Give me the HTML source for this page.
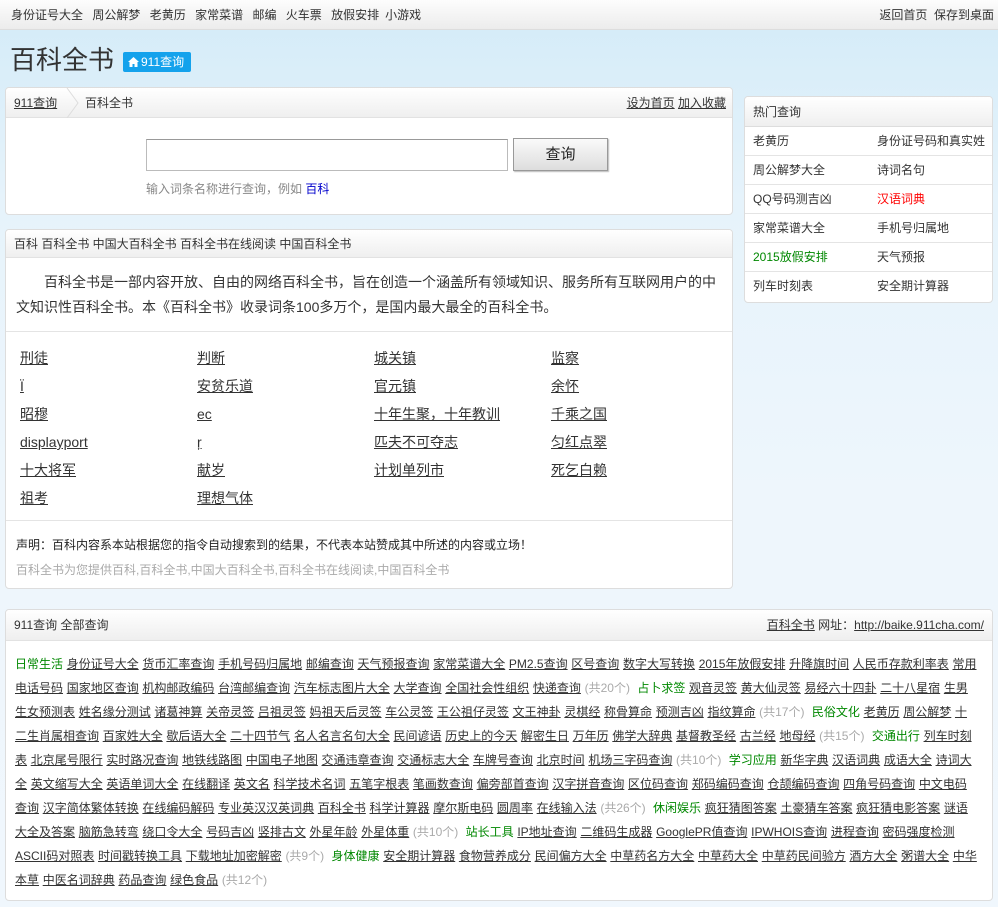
<!DOCTYPE html>
<html><head><meta charset="utf-8">
<style>
*{margin:0;padding:0;box-sizing:border-box}
body{width:998px;height:907px;overflow:hidden;font-family:"Liberation Sans","Noto Sans CJK SC",sans-serif;font-size:12px;color:#333;background:linear-gradient(180deg,#d3ebf8 0px,#e6f3fb 200px,#eef6fc 500px,#f0f7fd 907px);position:relative}
a{color:#333;text-decoration:underline}
.top{position:absolute;left:0;top:0;width:998px;height:30px;background:linear-gradient(#fdfdfd,#ececec);border-bottom:1px solid #ddd;line-height:30px;font-size:12px}
.top .l{position:absolute;left:11px}
.top .l span{margin-right:6px}
.top .r{position:absolute;right:4px}
.title{position:absolute;left:10px;top:42px;font-size:26px;color:#333;line-height:36px}
.badge{position:absolute;left:123px;top:52px;width:68px;height:20px;background:#14a2ec;color:#fff;font-size:12px;line-height:20px;border-radius:2px;padding-left:18px}
.badge svg{position:absolute;left:5px;top:5px}
.box{position:absolute;background:#fff;border:1px solid #ddd;border-radius:4px;overflow:hidden}
.hd{height:30px;background:linear-gradient(#fff,#efefef);border-bottom:1px solid #e2e2e2;line-height:30px;padding-left:8px;position:relative}
.links a{position:absolute;font-size:14px;line-height:16px}
.side div{height:29px;border-bottom:1px solid #e4e4e4;line-height:29px;position:relative;white-space:nowrap}
.side span{position:absolute}
.bot{position:absolute;left:15px;top:652px;width:963px;line-height:24px;font-size:12px;word-spacing:0.35px}
.g{color:#080}
.n{color:#aaa}
</style></head><body>
<div class="top"><div class="l"><span>身份证号大全</span> <span>周公解梦</span> <span>老黄历</span> <span>家常菜谱</span> <span>邮编</span> <span>火车票</span> <span>放假安排</span>小游戏</div><div class="r">返回首页 &nbsp;保存到桌面</div></div>
<div class="title">百科全书</div>
<div class="badge"><svg width="11" height="10" viewBox="0 0 11 10"><path d="M5.5 0L0 5h1.5v5h3V7h2v3h3V5H11z" fill="#fff"/></svg>911查询</div>

<div class="box" style="left:5px;top:87px;width:728px;height:128px">
<div class="hd" style="padding-left:0"><a style="position:absolute;left:8px">911查询</a><svg style="position:absolute;left:60px;top:0" width="14" height="30"><path d="M1 0L12 15L1 30" fill="none" stroke="#ddd"/></svg><span style="position:absolute;left:79px">百科全书</span><span style="position:absolute;right:6px"><a>设为首页</a> <a>加入收藏</a></span></div>
<div style="position:absolute;left:140px;top:51px;width:362px;height:32px;border:1px solid #bbb;border-top-color:#999"></div>
<div style="position:absolute;left:507px;top:50px;width:95px;height:33px;border:1px solid #999;background:linear-gradient(#fafafa,#ddd);text-align:center;line-height:31px;font-size:15px;color:#222;box-shadow:1px 1px 1px #bbb">查询</div>
<div style="position:absolute;left:140px;top:92px;color:#888">输入词条名称进行查询，例如 <span style="color:#00c">百科</span></div>
</div>

<div class="box" style="left:5px;top:229px;width:728px;height:360px">
<div class="hd" style="height:28px;line-height:28px">百科 百科全书 中国大百科全书 百科全书在线阅读 中国百科全书</div>
<div style="position:absolute;left:10px;top:40px;width:708px;font-size:14px;line-height:25px;text-indent:28px;color:#333">百科全书是一部内容开放、自由的网络百科全书，旨在创造一个涵盖所有领域知识、服务所有互联网用户的中文知识性百科全书。本《百科全书》收录词条100多万个，是国内最大最全的百科全书。</div>
<div style="position:absolute;left:0;top:101px;width:728px;border-top:1px solid #e4e4e4"></div>
<div class="links">
<a style="left:14px;top:120px">刑徒</a><a style="left:191px;top:120px">判断</a><a style="left:368px;top:120px">城关镇</a><a style="left:545px;top:120px">监察</a>
<a style="left:14px;top:148px">Ï</a><a style="left:191px;top:148px">安贫乐道</a><a style="left:368px;top:148px">官元镇</a><a style="left:545px;top:148px">余怀</a>
<a style="left:14px;top:176px">昭穆</a><a style="left:191px;top:176px">ec</a><a style="left:368px;top:176px">十年生聚，十年教训</a><a style="left:545px;top:176px">千乘之国</a>
<a style="left:14px;top:204px">displayport</a><a style="left:191px;top:204px">ŗ</a><a style="left:368px;top:204px">匹夫不可夺志</a><a style="left:545px;top:204px">匀红点翠</a>
<a style="left:14px;top:232px">十大将军</a><a style="left:191px;top:232px">献岁</a><a style="left:368px;top:232px">计划单列市</a><a style="left:545px;top:232px">死乞白赖</a>
<a style="left:14px;top:260px">祖考</a><a style="left:191px;top:260px">理想气体</a>
</div>
<div style="position:absolute;left:0;top:290px;width:728px;border-top:1px solid #e4e4e4"></div>
<div style="position:absolute;left:10px;top:306px;color:#222">声明：百科内容系本站根据您的指令自动搜索到的结果，不代表本站赞成其中所述的内容或立场！</div>
<div style="position:absolute;left:10px;top:331px;color:#aaa">百科全书为您提供百科,百科全书,中国大百科全书,百科全书在线阅读,中国百科全书</div>
</div>

<div class="box side" style="left:744px;top:96px;width:249px;height:207px">
<div class="hd" style="height:30px;line-height:30px;border-bottom:1px solid #ddd">热门查询</div>
<div><span style="left:8px">老黄历</span><span style="left:132px">身份证号码和真实姓</span></div>
<div><span style="left:8px">周公解梦大全</span><span style="left:132px">诗词名句</span></div>
<div><span style="left:8px">QQ号码测吉凶</span><span style="left:132px;color:#f00">汉语词典</span></div>
<div><span style="left:8px">家常菜谱大全</span><span style="left:132px">手机号归属地</span></div>
<div><span style="left:8px;color:#080">2015放假安排</span><span style="left:132px">天气预报</span></div>
<div style="border:0"><span style="left:8px">列车时刻表</span><span style="left:132px">安全期计算器</span></div>
</div>

<div class="box" style="left:5px;top:609px;width:988px;height:292px">
<div class="hd" style="height:31px;line-height:31px">911查询 全部查询<span style="position:absolute;right:8px"><a>百科全书</a> 网址：<a>http://baike.911cha.com/</a></span></div>
</div>
<div class="bot"><span class="g">日常生活</span> <a>身份证号大全</a> <a>货币汇率查询</a> <a>手机号码归属地</a> <a>邮编查询</a> <a>天气预报查询</a> <a>家常菜谱大全</a> <a>PM2.5查询</a> <a>区号查询</a> <a>数字大写转换</a> <a>2015年放假安排</a> <a>升降旗时间</a> <a>人民币存款利率表</a> <a>常用电话号码</a> <a>国家地区查询</a> <a>机构邮政编码</a> <a>台湾邮编查询</a> <a>汽车标志图片大全</a> <a>大学查询</a> <a>全国社会性组织</a> <a>快递查询</a> <span class="n">(共20个)</span> &nbsp;<span class="g">占卜求签</span> <a>观音灵签</a> <a>黄大仙灵签</a> <a>易经六十四卦</a> <a>二十八星宿</a> <a>生男生女预测表</a> <a>姓名缘分测试</a> <a>诸葛神算</a> <a>关帝灵签</a> <a>吕祖灵签</a> <a>妈祖天后灵签</a> <a>车公灵签</a> <a>王公祖仔灵签</a> <a>文王神卦</a> <a>灵棋经</a> <a>称骨算命</a> <a>预测吉凶</a> <a>指纹算命</a> <span class="n">(共17个)</span> &nbsp;<span class="g">民俗文化</span> <a>老黄历</a> <a>周公解梦</a> <a>十二生肖属相查询</a> <a>百家姓大全</a> <a>歇后语大全</a> <a>二十四节气</a> <a>名人名言名句大全</a> <a>民间谚语</a> <a>历史上的今天</a> <a>解密生日</a> <a>万年历</a> <a>佛学大辞典</a> <a>基督教圣经</a> <a>古兰经</a> <a>地母经</a> <span class="n">(共15个)</span> &nbsp;<span class="g">交通出行</span> <a>列车时刻表</a> <a>北京尾号限行</a> <a>实时路况查询</a> <a>地铁线路图</a> <a>中国电子地图</a> <a>交通违章查询</a> <a>交通标志大全</a> <a>车牌号查询</a> <a>北京时间</a> <a>机场三字码查询</a> <span class="n">(共10个)</span> &nbsp;<span class="g">学习应用</span> <a>新华字典</a> <a>汉语词典</a> <a>成语大全</a> <a>诗词大全</a> <a>英文缩写大全</a> <a>英语单词大全</a> <a>在线翻译</a> <a>英文名</a> <a>科学技术名词</a> <a>五笔字根表</a> <a>笔画数查询</a> <a>偏旁部首查询</a> <a>汉字拼音查询</a> <a>区位码查询</a> <a>郑码编码查询</a> <a>仓颉编码查询</a> <a>四角号码查询</a> <a>中文电码查询</a> <a>汉字简体繁体转换</a> <a>在线编码解码</a> <a>专业英汉汉英词典</a> <a>百科全书</a> <a>科学计算器</a> <a>摩尔斯电码</a> <a>圆周率</a> <a>在线输入法</a> <span class="n">(共26个)</span> &nbsp;<span class="g">休闲娱乐</span> <a>疯狂猜图答案</a> <a>土豪猜车答案</a> <a>疯狂猜电影答案</a> <a>谜语大全及答案</a> <a>脑筋急转弯</a> <a>绕口令大全</a> <a>号码吉凶</a> <a>竖排古文</a> <a>外星年龄</a> <a>外星体重</a> <span class="n">(共10个)</span> &nbsp;<span class="g">站长工具</span> <a>IP地址查询</a> <a>二维码生成器</a> <a>GooglePR值查询</a> <a>IPWHOIS查询</a> <a>进程查询</a> <a>密码强度检测</a> <a>ASCII码对照表</a> <a>时间戳转换工具</a> <a>下载地址加密解密</a> <span class="n">(共9个)</span> &nbsp;<span class="g">身体健康</span> <a>安全期计算器</a> <a>食物营养成分</a> <a>民间偏方大全</a> <a>中草药名方大全</a> <a>中草药大全</a> <a>中草药民间验方</a> <a>酒方大全</a> <a>粥谱大全</a> <a>中华本草</a> <a>中医名词辞典</a> <a>药品查询</a> <a>绿色食品</a> <span class="n">(共12个)</span></div>
</body></html>
